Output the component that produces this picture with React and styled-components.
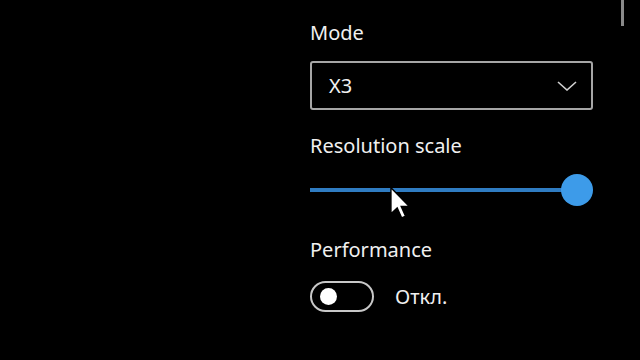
import React, { useState } from 'react';
import styled, { createGlobalStyle } from 'styled-components';

const GlobalStyle = createGlobalStyle`
  html, body {
    margin: 0;
    padding: 0;
    background: #000000;
  }
  body {
    font-family: 'Noto Sans', 'Open Sans', sans-serif;
    color: #ffffff;
  }
`;

const Page = styled.div`
  position: relative;
  width: 640px;
  height: 360px;
  overflow: hidden;
  background: #000000;
  display: flex;
  flex-direction: row;
  align-items: flex-start;
  padding-left: 310px;
  box-sizing: border-box;
`;

const Panel = styled.div`
  width: 283px;
  display: flex;
  flex-direction: column;
  padding-top: 19px;
`;

const Label = styled.div`
  font-size: 20px;
  line-height: 28px;
  height: 28px;
  color: #f0f0f0;
  margin-top: ${(p) => p.$gap || 0}px;
`;

const Select = styled.div`
  margin-top: 14px;
  height: 49px;
  box-sizing: border-box;
  border: 2px solid #a6a6a6;
  border-radius: 3px;
  display: flex;
  align-items: center;
  justify-content: space-between;
  padding: 0 14px 0 17px;
  font-size: 20px;
  color: #f0f0f0;
`;

const Slider = styled.div`
  margin-top: 14px;
  height: 32px;
  display: flex;
  align-items: center;
`;

const Track = styled.div`
  flex: 1;
  height: 4px;
  background: #2f7cc2;
`;

const Thumb = styled.div`
  width: 32px;
  height: 32px;
  border-radius: 50%;
  background: #3d9be9;
  margin-left: -13px;
  flex-shrink: 0;
`;

const ToggleRow = styled.div`
  margin-top: 17px;
  display: flex;
  align-items: center;
  gap: 21px;
`;

const Toggle = styled.button`
  width: 64px;
  height: 31px;
  box-sizing: border-box;
  border: 2px solid #c8c8c8;
  border-radius: 16px;
  background: transparent;
  padding: 0 0 0 8px;
  display: flex;
  align-items: center;
  cursor: pointer;
`;

const Knob = styled.span`
  width: 17px;
  height: 17px;
  border-radius: 50%;
  background: #ffffff;
`;

const ToggleText = styled.span`
  font-size: 20px;
  color: #f0f0f0;
`;

const ScrollThumb = styled.div`
  margin-left: 28px;
  width: 3px;
  height: 26px;
  background: #8a8a8a;
`;

const Pointer = styled.svg`
  position: absolute;
  left: 389px;
  top: 186px;
`;

const Chevron = () => (
  <svg width="20" height="10" viewBox="0 0 20 10">
    <path d="M1 1 L10 9 L19 1" fill="none" stroke="#d0d0d0" strokeWidth="1.6" />
  </svg>
);

export default function App() {
  const [on, setOn] = useState(false);
  return (
    <>
      <GlobalStyle />
      <Page>
        <Panel>
          <Label>Mode</Label>
          <Select>
            <span>X3</span>
            <Chevron />
          </Select>
          <Label $gap={22}>Resolution scale</Label>
          <Slider>
            <Track />
            <Thumb />
          </Slider>
          <Label $gap={30}>Performance</Label>
          <ToggleRow>
            <Toggle onClick={() => setOn(!on)}>
              <Knob />
            </Toggle>
            <ToggleText>Откл.</ToggleText>
          </ToggleRow>
        </Panel>
        <ScrollThumb />
        <Pointer width="23" height="33" viewBox="0 0 13 19">
          <path
            d="M1 1 L1 16 L4.6 12.6 L7.2 18.4 L9.4 17.4 L6.9 11.8 L11.6 11.8 Z"
            fill="#ffffff"
            stroke="#000000"
            strokeWidth="0.8"
            strokeLinejoin="miter"
          />
        </Pointer>
      </Page>
    </>
  );
}
